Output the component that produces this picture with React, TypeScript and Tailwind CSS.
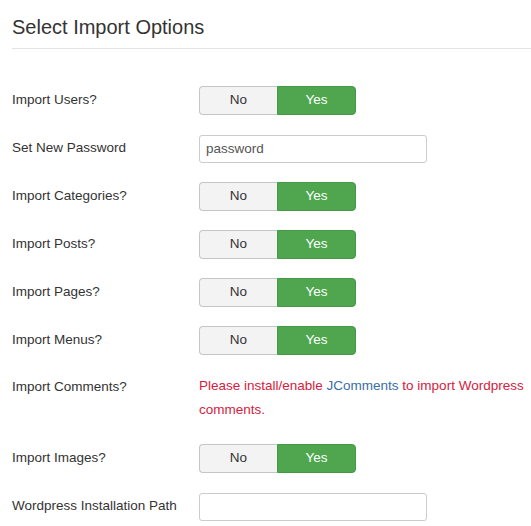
import React from 'react'

type Row =
  | { kind: 'toggle'; label: string }
  | { kind: 'input'; label: string; value: string }

function Toggle() {
  return (
    <div className="flex h-[29px] w-[157px] text-[13.5px]">
      <button className="w-[78px] rounded-l-[4px] border border-r-0 border-[#c5c5c5] bg-[#f3f3f3] text-[#333]">
        No
      </button>
      <button className="w-[79px] rounded-r-[4px] border border-[#449a44] bg-[#4fa64f] text-white">
        Yes
      </button>
    </div>
  )
}

function Field({ value }: { value: string }) {
  return (
    <input
      type="text"
      defaultValue={value}
      className="h-[28px] w-[228px] rounded-[3px] border border-[#ccc] px-[6px] text-[13.5px] text-[#555] outline-none"
    />
  )
}

export default function App() {
  const rows: Row[] = [
    { kind: 'toggle', label: 'Import Users?' },
    { kind: 'input', label: 'Set New Password', value: 'password' },
    { kind: 'toggle', label: 'Import Categories?' },
    { kind: 'toggle', label: 'Import Posts?' },
    { kind: 'toggle', label: 'Import Pages?' },
    { kind: 'toggle', label: 'Import Menus?' },
  ]

  return (
    <main className="bg-white pl-3 pt-[13px] font-['Liberation_Sans',Arial,sans-serif] text-[#333]">
      <h2 className="border-b border-[#e3e3e3] pb-[6px] text-[20px] leading-[29px] text-[#333]">
        Select Import Options
      </h2>

      <div className="mt-[37px] flex flex-col gap-[19px]">
        {rows.map((r, idx) => (
          <div key={idx} className="flex h-[29px] items-center">
            <label className="w-[187px] text-[13.5px]">{r.label}</label>
            {r.kind === 'toggle' ? <Toggle /> : <Field value={r.value} />}
          </div>
        ))}

        {/* comments */}
        <div className="flex h-[51px]">
          <label className="w-[187px] pt-[1px] text-[13.5px] leading-[24px]">Import Comments?</label>
          <p className="w-[332px] text-[13.5px] leading-[24px] text-[#d4213d]">
            Please install/enable <a className="text-[#3a6ea8]">JComments</a> to import Wordpress
            comments.
          </p>
        </div>

        <div className="flex h-[29px] items-center">
          <label className="w-[187px] text-[13.5px]">Import Images?</label>
          <Toggle />
        </div>
        <div className="flex h-[29px] items-center">
          <label className="w-[187px] text-[13.5px]">Wordpress Installation Path</label>
          <Field value="" />
        </div>
      </div>
    </main>
  )
}
